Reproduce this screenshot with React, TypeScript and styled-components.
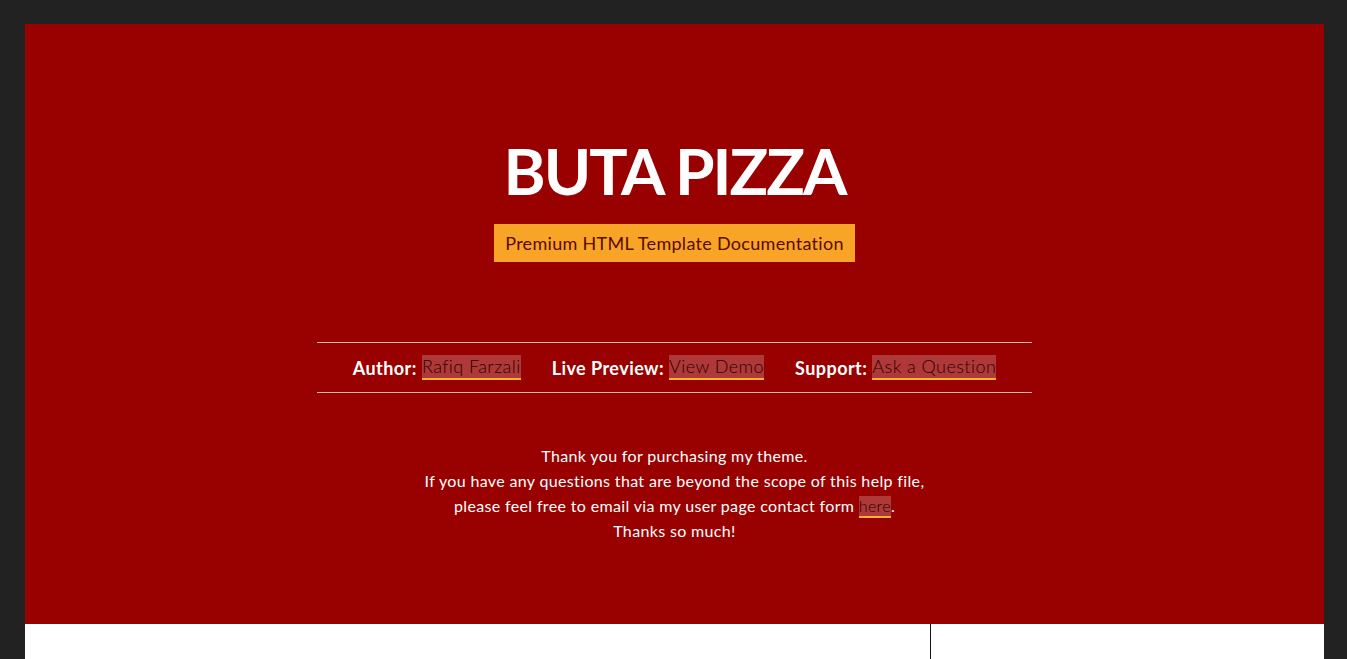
import React from "react";
import styled, { createGlobalStyle } from "styled-components";

const Global = createGlobalStyle`
  html, body { margin: 0; padding: 0; background: #222222; }
  body { font-family: "Lato", "Noto Sans", sans-serif; overflow: hidden; }
`;

const Page = styled.div`
  padding: 24px 23px 0 25px;
  height: 659px;
  box-sizing: border-box;
`;

const Container = styled.div`
  width: 1299px;
`;

const Hero = styled.header`
  background: #990000;
  height: 600px;
  box-sizing: border-box;
  padding-top: 115px;
  display: flex;
  flex-direction: column;
  align-items: center;
  color: #ffffff;
`;

const Title = styled.h1`
  margin: 0;
  font-size: 64px;
  line-height: 64px;
  font-weight: 700;
  letter-spacing: -2px;
`;

const Badge = styled.div`
  margin-top: 21px;
  background: #f8a427;
  color: #5a0a00;
  font-size: 18px;
  letter-spacing: 0.3px;
  line-height: 38px;
  padding: 0 11px;
`;

const MetaBar = styled.div`
  margin-top: 80px;
  width: 715px;
  height: 51px;
  box-sizing: border-box;
  border-top: 1px solid #e9b3b3;
  border-bottom: 1px solid #e9b3b3;
  display: flex;
  justify-content: center;
  align-items: center;
  gap: 31px;
`;

const MetaItem = styled.div`
  font-size: 18px;
  letter-spacing: 0.45px;
  display: flex;
  align-items: center;
  gap: 5px;
`;

const Label = styled.strong`
  font-weight: 700;
  color: #ffffff;
`;

const Link = styled.a`
  color: #2a0000;
  font-weight: 300;
  text-decoration: none;
  background: rgba(255, 255, 255, 0.22);
  border-bottom: 2px solid #f8b52a;
  line-height: 23px;
  display: inline-block;
`;

const Note = styled.p`
  margin: 50px 0 0;
  font-size: 16px;
  letter-spacing: 0.35px;
  line-height: 25px;
  text-align: center;
  color: #ffffff;
`;

const InlineLink = styled(Link)`
  font-size: 16px;
  line-height: 20px;
`;

const Body = styled.div`
  display: grid;
  grid-template-columns: 906px 1fr;
  background: #ffffff;
  height: 40px;
`;

const Main = styled.div`
  border-right: 1px solid #111111;
`;

const Side = styled.aside``;

export default function App() {
  return (
    <>
      <Global />
      <Page>
        <Container>
          <Hero>
            <Title>BUTA PIZZA</Title>
            <Badge>Premium HTML Template Documentation</Badge>
            <MetaBar>
              <MetaItem>
                <Label>Author:</Label>
                <Link href="#">Rafiq Farzali</Link>
              </MetaItem>
              <MetaItem>
                <Label>Live Preview:</Label>
                <Link href="#">View Demo</Link>
              </MetaItem>
              <MetaItem>
                <Label>Support:</Label>
                <Link href="#">Ask a Question</Link>
              </MetaItem>
            </MetaBar>
            <Note>
              Thank you for purchasing my theme.
              <br />
              If you have any questions that are beyond the scope of this help file,
              <br />
              please feel free to email via my user page contact form <InlineLink href="#">here</InlineLink>.
              <br />
              Thanks so much!
            </Note>
          </Hero>
          <Body>
            <Main />
            <Side />
          </Body>
        </Container>
      </Page>
    </>
  );
}
